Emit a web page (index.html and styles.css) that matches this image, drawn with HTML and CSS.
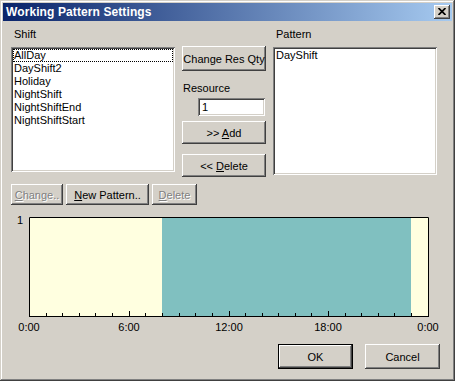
FILE: index.html
```html
<!DOCTYPE html>
<html>
<head>
<meta charset="utf-8">
<title>Working Pattern Settings</title>
<link rel="stylesheet" href="styles.css">
</head>
<body>
<div class="window">
  <div class="titlebar">
    <span class="title">Working Pattern Settings</span>
    <span class="close-btn">
      <svg width="8" height="7" viewBox="0 0 8 7"><path d="M0.5 0 L7.5 7 M7.5 0 L0.5 7" stroke="#000" stroke-width="1.7" fill="none"/></svg>
    </span>
  </div>
  <div class="content">
    <div class="top-row">
      <div class="col col-shift">
        <div class="label">Shift</div>
        <div class="listbox listbox-shift">
          <div class="item focus">AllDay</div>
          <div class="item">DayShift2</div>
          <div class="item">Holiday</div>
          <div class="item">NightShift</div>
          <div class="item">NightShiftEnd</div>
          <div class="item">NightShiftStart</div>
        </div>
      </div>
      <div class="col col-mid">
        <div class="btn btn-resqty"><span>Change Res Qty</span></div>
        <div class="label label-res">Resource</div>
        <div class="input">1</div>
        <div class="btn btn-add"><span>&gt;&gt; <u>A</u>dd</span></div>
        <div class="btn btn-del"><span>&lt;&lt; <u>D</u>elete</span></div>
      </div>
      <div class="col col-pattern">
        <div class="label">Pattern</div>
        <div class="listbox listbox-pattern">
          <div class="item">DayShift</div>
        </div>
      </div>
    </div>
    <div class="btn-row">
      <div class="btn btn-small disabled w-change"><span><u>C</u>hange..</span></div>
      <div class="btn btn-small w-new"><span><u>N</u>ew Pattern..</span></div>
      <div class="btn btn-small disabled w-delete"><span><u>D</u>elete</span></div>
    </div>
    <svg class="chart" width="434" height="128" viewBox="0 0 434 128">
      <rect x="18" y="10" width="400" height="100" fill="#ffffe0"/>
      <rect x="151" y="10" width="249" height="100" fill="#80c0c0"/>
      <path d="M18.5 110 V10.5 H417.5 V110 M18 109.5 H418" stroke="#000" stroke-width="1" fill="none"/>
      <g stroke="#000" stroke-width="1">
        <line x1="35.5" y1="106" x2="35.5" y2="109"/>
        <line x1="51.5" y1="106" x2="51.5" y2="109"/>
        <line x1="68.5" y1="106" x2="68.5" y2="109"/>
        <line x1="84.5" y1="106" x2="84.5" y2="109"/>
        <line x1="101.5" y1="106" x2="101.5" y2="109"/>
        <line x1="118.5" y1="104" x2="118.5" y2="109"/>
        <line x1="134.5" y1="106" x2="134.5" y2="109"/>
        <line x1="151.5" y1="106" x2="151.5" y2="109"/>
        <line x1="168.5" y1="106" x2="168.5" y2="109"/>
        <line x1="184.5" y1="106" x2="184.5" y2="109"/>
        <line x1="201.5" y1="106" x2="201.5" y2="109"/>
        <line x1="218.5" y1="104" x2="218.5" y2="109"/>
        <line x1="234.5" y1="106" x2="234.5" y2="109"/>
        <line x1="251.5" y1="106" x2="251.5" y2="109"/>
        <line x1="267.5" y1="106" x2="267.5" y2="109"/>
        <line x1="284.5" y1="106" x2="284.5" y2="109"/>
        <line x1="300.5" y1="106" x2="300.5" y2="109"/>
        <line x1="317.5" y1="104" x2="317.5" y2="109"/>
        <line x1="334.5" y1="106" x2="334.5" y2="109"/>
        <line x1="350.5" y1="106" x2="350.5" y2="109"/>
        <line x1="367.5" y1="106" x2="367.5" y2="109"/>
        <line x1="383.5" y1="106" x2="383.5" y2="109"/>
        <line x1="400.5" y1="106" x2="400.5" y2="109"/>
      </g>
      <g class="axis-text">
        <text x="12" y="17" text-anchor="end">1</text>
        <text x="18" y="124" text-anchor="middle">0:00</text>
        <text x="118" y="124" text-anchor="middle">6:00</text>
        <text x="218" y="124" text-anchor="middle">12:00</text>
        <text x="317" y="124" text-anchor="middle">18:00</text>
        <text x="417" y="124" text-anchor="middle">0:00</text>
      </g>
    </svg>
    <div class="footer">
      <div class="btn btn-foot btn-default"><span>OK</span></div>
      <div class="btn btn-foot"><span>Cancel</span></div>
    </div>
  </div>
</div>
</body>
</html>
```
FILE: styles.css
```css
html, body {
  margin: 0;
  padding: 0;
  background: #d4d0c8;
}
.window {
  width: 455px;
  height: 381px;
  box-sizing: border-box;
  padding: 3px;
  background: #d4d0c8;
  box-shadow: inset -1px -1px #404040, inset 1px 1px #d4d0c8, inset -2px -2px #808080, inset 2px 2px #ffffff;
  font-family: "Liberation Sans", Arial, sans-serif;
  font-size: 11px;
  color: #000;
}
.titlebar {
  height: 18px;
  display: flex;
  align-items: center;
  justify-content: space-between;
  padding: 0 2px 0 3px;
  background: linear-gradient(to right, #0a246a, #a6caf0);
}
.title {
  color: #fff;
  font-weight: bold;
  font-size: 12px;
  letter-spacing: 0.1px;
}
.close-btn {
  width: 16px;
  height: 14px;
  box-sizing: border-box;
  background: #d4d0c8;
  display: flex;
  align-items: center;
  justify-content: center;
  box-shadow: inset -1px -1px #404040, inset 1px 1px #ffffff, inset -2px -2px #808080;
}
.close-btn svg {
  display: block;
  margin-top: -1px;
  margin-left: -1px;
}
.content {
  padding: 7px 0 0 8px;
}
.top-row {
  display: flex;
  align-items: flex-start;
  height: 149px;
}
.col-shift {
  width: 164px;
}
.col-mid {
  width: 84px;
  margin-left: 7px;
  display: flex;
  flex-direction: column;
}
.col-pattern {
  width: 164px;
  margin-left: 7px;
}
.label {
  line-height: 13px;
  height: 13px;
  padding-left: 3px;
  margin-bottom: 6px;
}
.listbox {
  background: #fff;
  box-sizing: border-box;
  padding: 2px;
  box-shadow: inset 1px 1px #808080, inset -1px -1px #ffffff, inset 2px 2px #404040, inset -2px -2px #d4d0c8;
}
.listbox-shift { height: 125px; }
.listbox-pattern { height: 128px; }
.item {
  height: 13px;
  line-height: 12px;
  padding-left: 1px;
  box-sizing: border-box;
  white-space: nowrap;
}
.item.focus {
  outline: 1px dotted #000;
  outline-offset: -1px;
}
.btn {
  box-sizing: border-box;
  background: #d4d0c8;
  display: flex;
  align-items: center;
  justify-content: center;
  white-space: nowrap;
  box-shadow: inset -1px -1px #404040, inset 1px 1px #ffffff, inset -2px -2px #808080, inset 2px 2px #d4d0c8;
}
.btn-resqty {
  margin-top: 18px;
  height: 25px;
}
.label-res {
  margin: 11px 0 0 0;
  padding-left: 1px;
}
.input {
  margin: 3px 0 0 16px;
  width: 67px;
  height: 18px;
  box-sizing: border-box;
  background: #fff;
  line-height: 15px;
  padding: 2px 0 0 4px;
  box-shadow: inset 1px 1px #808080, inset -1px -1px #ffffff, inset 2px 2px #404040, inset -2px -2px #d4d0c8;
}
.btn-add {
  margin-top: 5px;
  height: 23px;
}
.btn-del {
  margin-top: 10px;
  height: 23px;
}
.btn-row {
  display: flex;
  gap: 3px;
  margin-top: 7px;
}
.btn-small {
  height: 21px;
}
.w-change { width: 52px; }
.w-new { width: 83px; }
.w-delete { width: 45px; }
.disabled {
  color: #808080;
  text-shadow: 1px 1px #ffffff;
}
.chart {
  display: block;
  margin-top: 2px;
}
.axis-text text {
  font-family: "Liberation Sans", Arial, sans-serif;
  font-size: 11px;
  fill: #000;
}
.footer {
  display: flex;
  justify-content: flex-end;
  gap: 12px;
  margin-top: 9px;
  padding-right: 12px;
}
.btn-foot {
  width: 75px;
  height: 25px;
}
.btn-default {
  box-shadow: inset 0 0 0 1px #000, inset -2px -2px #404040, inset 2px 2px #ffffff, inset -3px -3px #808080;
}
```
